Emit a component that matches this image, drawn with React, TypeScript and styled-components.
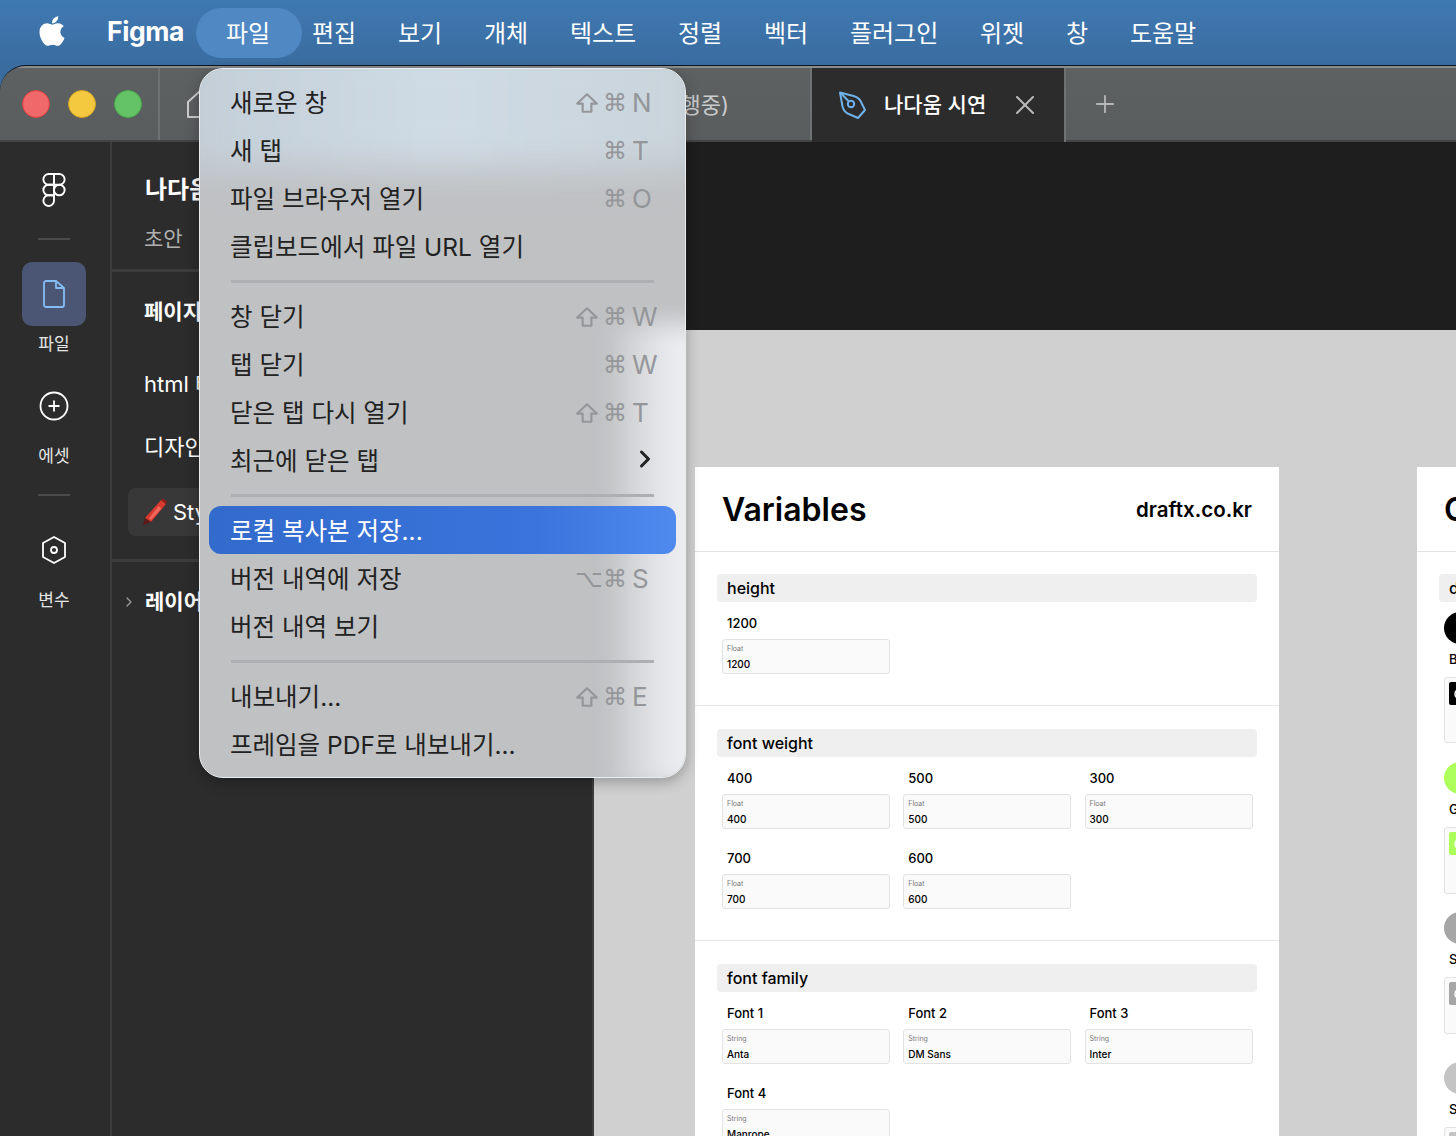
import styled, {createGlobalStyle} from 'styled-components';
import {ChevronRight, Plus, X} from 'lucide-react';
import {FaApple} from 'react-icons/fa';

const menuBarItems = ['편집', '보기', '개체', '텍스트', '정렬', '벡터', '플러그인', '위젯', '창', '도움말'];

type MenuEntry = {
  label: string;
  mod?: 'shift' | 'option';
  cmd?: boolean;
  letter?: string;
  more?: boolean;
  active?: boolean;
};

const menuGroups: MenuEntry[][] = [
  [
    {label: '새로운 창', mod: 'shift', cmd: true, letter: 'N'},
    {label: '새 탭', cmd: true, letter: 'T'},
    {label: '파일 브라우저 열기', cmd: true, letter: 'O'},
    {label: '클립보드에서 파일 URL 열기'},
  ],
  [
    {label: '창 닫기', mod: 'shift', cmd: true, letter: 'W'},
    {label: '탭 닫기', cmd: true, letter: 'W'},
    {label: '닫은 탭 다시 열기', mod: 'shift', cmd: true, letter: 'T'},
    {label: '최근에 닫은 탭', more: true},
  ],
  [
    {label: '로컬 복사본 저장...', active: true},
    {label: '버전 내역에 저장', mod: 'option', cmd: true, letter: 'S'},
    {label: '버전 내역 보기'},
  ],
  [
    {label: '내보내기...', mod: 'shift', cmd: true, letter: 'E'},
    {label: '프레임을 PDF로 내보내기...'},
  ],
];

const swatches = [
  {color: '#000', label: 'Black', h: 66},
  {color: '#adff5c', label: 'Green', h: 67},
  {color: '#a6a6a6', label: 'Surface 1', h: 57},
  {color: '#c4c4c4', label: 'Surface 2', h: 66},
];

function FigmaLogo() {
  return (
    <svg width="24" height="34" viewBox="0 0 22 32" fill="none" stroke="#fff" strokeWidth="1.8">
      <path d="M11 1H6a5 5 0 0 0 0 10h5z"/>
      <path d="M11 1h5a5 5 0 0 1 0 10h-5z"/>
      <path d="M11 11H6a5 5 0 0 0 0 10h5z"/>
      <circle cx="16" cy="16" r="5"/>
      <path d="M6 21h5v5a5 5 0 1 1-5-5z"/>
    </svg>
  );
}

function ShiftIcon() {
  return (
    <svg width="24" height="22" viewBox="0 0 22 20" fill="none" stroke="#94969a" strokeWidth="2" strokeLinejoin="round">
      <path d="M11 2 2 10.500h5V18h8v-7.500h5z"/>
    </svg>
  );
}

function Shortcut({entry}: {entry: MenuEntry}) {
  return (
    <Keys>
      <KeyCell>
        {entry.mod === 'shift' && <ShiftIcon/>}
        {entry.mod === 'option' && '⌥'}
      </KeyCell>
      <KeyCell>⌘</KeyCell>
      <KeyLetter>{entry.letter}</KeyLetter>
    </Keys>
  );
}

function Field({label, type, value}: {label: string; type: string; value: string}) {
  return (
    <FieldWrap>
      <FieldLabel>{label}</FieldLabel>
      <FieldCard>
        <FieldType>{type}</FieldType>
        <FieldValue>{value}</FieldValue>
      </FieldCard>
    </FieldWrap>
  );
}

export default function App() {
  return (
    <Screen>
      <GlobalStyle/>

      <MenuBar>
        <AppleMark><FaApple size={34} color="#fff"/></AppleMark>
        <AppName>Figma</AppName>
        <OpenMenuItem>파일</OpenMenuItem>
        <MenuBarList>
          {menuBarItems.map(item => <MenuBarItem key={item}>{item}</MenuBarItem>)}
        </MenuBarList>
      </MenuBar>

      <Window>
        <TabBar>
          <TrafficLights>
            <Light $color="#f0686a" $edge="#d9403f"/>
            <Light $color="#f5c93f" $edge="#d6a626"/>
            <Light $color="#62c466" $edge="#4aa84e"/>
          </TrafficLights>
          <HomeTab>
            <svg width="28" height="30" viewBox="0 0 28 30" fill="none" stroke="#c9cbcc" strokeWidth="2" strokeLinejoin="round">
              <path d="M2 13 14 2l12 11v15H2z"/>
            </svg>
          </HomeTab>
          <PlainTab>플레이그라운드 프로젝트 (진행중)</PlainTab>
          <ActiveTab>
            <svg width="30" height="30" viewBox="0 0 30 30" fill="none" stroke="#6fb1ea" strokeWidth="2" strokeLinejoin="round">
              <path d="M2 2.500 15.500 6c4 1.200 7 3.500 8 7l3.500 7-7 8-8-3.500c-3.500-1-6.500-4-7.500-8z"/>
              <path d="m2 2.500 8.500 8.500"/>
              <circle cx="13" cy="14" r="3.200"/>
            </svg>
            <ActiveTabTitle>나다움 시연</ActiveTabTitle>
            <X size={32} color="#b9b9b9" strokeWidth={1.5}/>
          </ActiveTab>
          <NewTab><Plus size={28} color="#b4b6b7" strokeWidth={1.6}/></NewTab>
        </TabBar>

        <Workspace>
          <Rail>
            <RailLogo><FigmaLogo/></RailLogo>
            <RailDivider/>
            <RailButton>
              <RailIconBox $active>
                <svg width="24" height="30" viewBox="0 0 24 30" fill="none" stroke="#84bdf5" strokeWidth="1.800" strokeLinejoin="round">
                  <path d="M4 2h10v7h8v17a2 2 0 0 1-2 2H4a2 2 0 0 1-2-2V4a2 2 0 0 1 2-2z"/>
                  <path d="m14 2 8 7"/>
                </svg>
              </RailIconBox>
              <RailLabel>파일</RailLabel>
            </RailButton>
            <RailButton>
              <RailIconBox>
                <svg width="30" height="30" viewBox="0 0 30 30" fill="none" stroke="#fff" strokeWidth="1.800">
                  <circle cx="15" cy="15" r="13.500"/>
                  <path d="M15 9.500v11M9.500 15h11"/>
                </svg>
              </RailIconBox>
              <RailLabel>에셋</RailLabel>
            </RailButton>
            <RailDivider $tight/>
            <RailButton>
              <RailIconBox>
                <svg width="26" height="30" viewBox="0 0 26 30" fill="none" stroke="#fff" strokeWidth="1.800" strokeLinejoin="round">
                  <path d="M13 2 24 8v14l-11 6-11-6V8z"/>
                  <circle cx="13" cy="15" r="3"/>
                </svg>
              </RailIconBox>
              <RailLabel>변수</RailLabel>
            </RailButton>
          </Rail>

          <Panel>
            <PanelHead>
              <FileName>나다움 시연</FileName>
              <FileState>초안</FileState>
            </PanelHead>
            <PagesBlock>
              <BlockTitle>페이지</BlockTitle>
              <PageRow $first>html 태그</PageRow>
              <PageRow>디자인 시스템</PageRow>
              <PageRowActive>
                <svg width="26" height="28" viewBox="0 0 26 28">
                  <path d="M19 2 24 6 9 24 3 20z" fill="#d9392f"/>
                  <path d="M19 2l2-1.500 4 3L24 6z" fill="#8f1f1a"/>
                  <path d="M3 20l6 4-8 3.500z" fill="#5a1b18"/>
                  <path d="M16.500 8l3 2.500L9 22l-2-1.500z" fill="#f0675c"/>
                </svg>
                Style Guide
              </PageRowActive>
            </PagesBlock>
            <LayersRow>
              <ChevronRight size={16} color="#999"/>
              <BlockTitle>레이어</BlockTitle>
            </LayersRow>
          </Panel>

          <Canvas>
            <TopStrip/>
            <Board>
              <Frame>
                <FrameHead>
                  <FrameTitle>Variables</FrameTitle>
                  <FrameSite>draftx.co.kr</FrameSite>
                </FrameHead>
                <Section>
                  <Band>height</Band>
                  <Fields>
                    <Field label="1200" type="Float" value="1200"/>
                  </Fields>
                </Section>
                <Section>
                  <Band>font weight</Band>
                  <Fields>
                    <Field label="400" type="Float" value="400"/>
                    <Field label="500" type="Float" value="500"/>
                    <Field label="300" type="Float" value="300"/>
                    <Field label="700" type="Float" value="700"/>
                    <Field label="600" type="Float" value="600"/>
                  </Fields>
                </Section>
                <Section>
                  <Band>font family</Band>
                  <Fields>
                    <Field label="Font 1" type="String" value="Anta"/>
                    <Field label="Font 2" type="String" value="DM Sans"/>
                    <Field label="Font 3" type="String" value="Inter"/>
                    <Field label="Font 4" type="String" value="Manrope"/>
                  </Fields>
                </Section>
              </Frame>

              <Frame>
                <FrameHead>
                  <FrameTitle>Colors</FrameTitle>
                  <FrameSite>draftx.co.kr</FrameSite>
                </FrameHead>
                <Section>
                  <Band>default</Band>
                  <SwatchList>
                    {swatches.map(s => (
                      <Swatch key={s.label}>
                        <SwatchDot $color={s.color}/>
                        <SwatchName>{s.label}</SwatchName>
                        <SwatchCard $height={s.h}>
                          <SwatchChip $color={s.color}>
                            <svg width="14" height="14" viewBox="0 0 14 14" fill="none" stroke="#fff" strokeWidth="1.500">
                              <circle cx="7" cy="7" r="5"/>
                            </svg>
                          </SwatchChip>
                        </SwatchCard>
                      </Swatch>
                    ))}
                  </SwatchList>
                </Section>
              </Frame>
            </Board>
          </Canvas>
        </Workspace>
      </Window>

      <DropMenu>
        {menuGroups.map((group, i) => (
          <MenuGroup key={i} $first={i === 0}>
            {group.map(entry => (
              <MenuRow key={entry.label} $active={entry.active}>
                <span>{entry.label}</span>
                {entry.letter && <Shortcut entry={entry}/>}
                {entry.more && <MoreArrow><ChevronRight size={28} color="#222" strokeWidth={2.6}/></MoreArrow>}
              </MenuRow>
            ))}
          </MenuGroup>
        ))}
      </DropMenu>
    </Screen>
  );
}

const GlobalStyle = createGlobalStyle`
  html, body {
    margin: 0;
    padding: 0;
    background: #3f76ac;
  }

  * {
    box-sizing: border-box;
  }
`;

const Screen = styled.div`
  position: relative;
  display: flex;
  flex-direction: column;
  width: 1456px;
  height: 1136px;
  overflow: hidden;
  font-family: Inter, "Noto Sans CJK KR", sans-serif;
  background: linear-gradient(180deg, #3f79b2 0, #3a6c9f 66px);
`;

const MenuBar = styled.div`
  display: flex;
  align-items: center;
  flex: 0 0 65px;
  padding-left: 35px;
  color: #fff;
`;

const AppleMark = styled.div`
  display: flex;
  width: 72px;
  margin-top: -3px;
`;

const AppName = styled.div`
  width: 89px;
  padding-bottom: 3px;
  font-size: 26.5px;
  font-weight: 700;
  letter-spacing: -0.4px;
`;

const OpenMenuItem = styled.div`
  display: flex;
  align-items: center;
  justify-content: center;
  width: 106px;
  height: 50px;
  padding: 0 2px 3px 0;
  border-radius: 25px;
  background: #4f88c3;
  font-size: 24px;
`;

const MenuBarList = styled.div`
  display: flex;
  gap: 41.8px;
  margin-left: 10px;
  padding-bottom: 3px;
`;

const MenuBarItem = styled.div`
  font-size: 24px;
  white-space: nowrap;
`;

const Window = styled.div`
  display: flex;
  flex-direction: column;
  flex: 1;
  min-height: 0;
  border-top: 1px solid #0c1520;
  border-top-left-radius: 26px;
  overflow: hidden;
  background: #2c2c2c;
`;

const TabBar = styled.div`
  display: flex;
  flex: 0 0 76px;
  padding-top: 2px;
  background: linear-gradient(180deg, #8a8c8d 0, #8a8c8d 2px, #5d6162 2px, #5a5d5e 100%);
  border-bottom: 2px solid #444;
`;

const TrafficLights = styled.div`
  display: flex;
  align-items: center;
  gap: 18px;
  width: 160px;
  padding-left: 22px;
  border-right: 2px solid #6f7273;
`;

const Light = styled.div<{$color: string; $edge: string}>`
  width: 28px;
  height: 28px;
  border-radius: 50%;
  background: ${({$color}) => $color};
  border: 1px solid ${({$edge}) => $edge};
`;

const HomeTab = styled.div`
  display: flex;
  align-items: center;
  width: 80px;
  padding-left: 26px;
`;

const PlainTab = styled.div`
  display: flex;
  align-items: center;
  justify-content: flex-end;
  width: 572px;
  padding: 0 81px 2px 0;
  border-right: 2px solid #6f7273;
  color: #c9cbcc;
  font-size: 22px;
  white-space: nowrap;
  overflow: hidden;
`;

const ActiveTab = styled.div`
  display: flex;
  align-items: center;
  width: 254px;
  padding-left: 26px;
  margin-bottom: -2px;
  background: #2c2c2c;
  border-right: 2px solid #6f7273;
`;

const ActiveTabTitle = styled.div`
  width: 125px;
  margin-left: 16px;
  padding-bottom: 4px;
  color: #fff;
  font-size: 21px;
  font-weight: 500;
`;

const NewTab = styled.div`
  display: flex;
  align-items: center;
  padding-left: 25px;
`;

const Workspace = styled.div`
  display: flex;
  flex: 1;
  min-height: 0;
`;

const Rail = styled.div`
  display: flex;
  flex-direction: column;
  align-items: center;
  flex: 0 0 112px;
  padding-right: 2px;
  background: #2c2c2c;
  border-right: 2px solid #3d3d3d;
`;

const RailLogo = styled.div`
  display: flex;
  margin-top: 31px;
`;

const RailDivider = styled.div<{$tight?: boolean}>`
  width: 32px;
  height: 2px;
  margin: ${({$tight}) => ($tight ? '8px' : '31px')} 0 22px;
  background: #4b4b4b;
`;

const RailButton = styled.div`
  display: flex;
  flex-direction: column;
  align-items: center;
  margin-bottom: 17px;
`;

const RailIconBox = styled.div<{$active?: boolean}>`
  display: flex;
  align-items: center;
  justify-content: center;
  width: 64px;
  height: 64px;
  border-radius: 10px;
  background: ${({$active}) => ($active ? '#4a5673' : 'transparent')};
`;

const RailLabel = styled.div`
  margin-top: 5px;
  color: #e4e4e4;
  font-size: 17px;
  line-height: 26px;
`;

const Panel = styled.div`
  flex: 0 0 482px;
  background: #2c2c2c;
  color: #fff;
  border-right: 2px solid #3d3d3d;
`;

const PanelHead = styled.div`
  height: 130px;
  padding: 30px 0 0 32px;
  border-bottom: 3px solid #3d3d3d;
`;

const FileName = styled.div`
  padding-left: 1px;
  font-size: 24px;
  font-weight: 700;
  line-height: 36px;
`;

const FileState = styled.div`
  margin-top: 17px;
  color: #b0b0b0;
  font-size: 21px;
  line-height: 28px;
`;

const PagesBlock = styled.div`
  height: 290px;
  padding: 24px 0 0 32px;
  border-bottom: 3px solid #3d3d3d;
`;

const BlockTitle = styled.div`
  font-size: 21px;
  font-weight: 700;
  line-height: 32px;
`;

const PageRow = styled.div<{$first?: boolean}>`
  margin-top: ${({$first}) => ($first ? '40px' : '31px')};
  font-size: 22px;
  line-height: 32px;
  white-space: nowrap;
`;

const PageRowActive = styled.div`
  display: flex;
  align-items: center;
  gap: 5px;
  height: 48px;
  margin: 25px 20px 0 -16px;
  padding: 0 0 1px 14px;
  border-radius: 8px;
  background: #383838;
  font-size: 22px;
  white-space: nowrap;
`;

const LayersRow = styled.div`
  display: flex;
  align-items: center;
  gap: 8px;
  padding: 24px 0 0 9px;
`;

const Canvas = styled.div`
  flex: 1;
  min-width: 0;
  display: flex;
  flex-direction: column;
  background: #d0d0d0;
`;

const TopStrip = styled.div`
  flex: 0 0 188px;
  background: #1e1e1e;
`;

const Board = styled.div`
  display: flex;
  gap: 138px;
  padding: 137px 0 0 101px;
`;

const Frame = styled.div`
  flex: 0 0 584px;
  height: 900px;
  background: #fff;
`;

const FrameHead = styled.div`
  display: flex;
  align-items: center;
  justify-content: space-between;
  height: 85px;
  margin-bottom: -1px;
  padding: 0 27px 0 28px;
  border-bottom: 1px solid #e3e3e3;
`;

const FrameTitle = styled.div`
  margin-left: -1px;
  color: #000;
  font-size: 32px;
  font-weight: 600;
`;

const FrameSite = styled.div`
  color: #000;
  font-size: 20.5px;
  font-weight: 600;
`;

const Section = styled.div`
  padding: 23px 22px 31px;
  border-bottom: 1px solid #e6e6e6;
`;

const Band = styled.div`
  height: 28px;
  padding-left: 10px;
  border-radius: 4px;
  background: #efefef;
  color: #000;
  font-size: 16px;
  font-weight: 500;
  line-height: 28px;
`;

const Fields = styled.div`
  display: grid;
  grid-template-columns: repeat(3, 168px);
  column-gap: 13.25px;
  row-gap: 18px;
  margin-top: 10px;
  padding-left: 5px;
`;

const FieldWrap = styled.div`
  display: flex;
  flex-direction: column;
`;

const FieldLabel = styled.div`
  height: 27px;
  padding-left: 5px;
  color: #000;
  font-size: 13px;
  font-weight: 500;
  line-height: 22px;
`;

const FieldCard = styled.div`
  height: 35px;
  padding: 4px 4px 0;
  border: 1px solid #e2e2e2;
  border-radius: 3px;
  background: #fafafa;
`;

const FieldType = styled.div`
  color: #7a7a7a;
  font-size: 7px;
  line-height: 9px;
`;

const FieldValue = styled.div`
  margin-top: 5px;
  color: #000;
  font-size: 10px;
  font-weight: 500;
  line-height: 13px;
`;

const SwatchList = styled.div`
  display: flex;
  flex-direction: column;
  margin-top: 10px;
  padding-left: 5px;
`;

const Swatch = styled.div`
  display: flex;
  flex-direction: column;
  align-items: flex-start;
  height: 150px;
`;

const SwatchDot = styled.div<{$color: string}>`
  width: 32px;
  height: 32px;
  border-radius: 50%;
  background: ${({$color}) => $color};
`;

const SwatchName = styled.div`
  margin: 7px 0 10px 5px;
  color: #000;
  font-size: 13px;
  font-weight: 500;
  line-height: 16px;
`;

const SwatchCard = styled.div<{$height: number}>`
  width: 168px;
  height: ${({$height}) => $height}px;
  padding: 4px;
  border: 1px solid #e2e2e2;
  border-radius: 3px;
  background: #fafafa;
`;

const SwatchChip = styled.div<{$color: string}>`
  display: flex;
  align-items: center;
  width: 60px;
  height: 23px;
  padding-left: 4px;
  border-radius: 2px;
  background: ${({$color}) => $color};
`;

const DropMenu = styled.div`
  position: absolute;
  left: 199px;
  top: 68px;
  width: 487px;
  height: 710px;
  padding: 9px 9px 0;
  overflow: hidden;
  border: 1px solid #e9edf0;
  border-radius: 24px;
  box-shadow: 0 4px 14px rgba(0, 0, 0, 0.28);
  background: #bfc1c3;

  /* what the frosted glass picks up from behind: the blue desktop on top */
  &::before {
    content: '';
    position: absolute;
    left: -20px;
    right: -20px;
    top: -30px;
    height: 130px;
    background: linear-gradient(90deg, #c3ced7 0, #cfdbe5 50%, #c9d3da 100%);
    filter: blur(18px);
  }

  /* and the white frame at the lower right */
  &::after {
    content: '';
    position: absolute;
    left: 415px;
    right: -30px;
    top: 255px;
    bottom: -10px;
    background: linear-gradient(90deg, #c9cbcd 0, #e9ebee 55%, #eff1f3 100%);
    filter: blur(12px);
  }
`;

const MenuGroup = styled.div<{$first?: boolean}>`
  position: relative;
  z-index: 1;
  padding-top: ${({$first}) => ($first ? '0' : '9px')};
  margin: ${({$first}) => ($first ? '0' : '10px 22px 0')};
  border-top: ${({$first}) => ($first ? 'none' : '3px solid #aeafb3')};

  & > div {
    margin: ${({$first}) => ($first ? '0' : '0 -22px')};
  }
`;

const MenuRow = styled.div<{$active?: boolean}>`
  display: flex;
  align-items: center;
  justify-content: space-between;
  height: 48px;
  padding: 0 16px 2px 21px;
  border-radius: 12px;
  color: ${({$active}) => ($active ? '#fff' : '#222')};
  background: ${({$active}) => ($active ? 'linear-gradient(90deg, #326bcb 0, #3a74dc 70%, #4f8bef 100%)' : 'transparent')};
  font-size: 24.5px;
  white-space: nowrap;
`;

const Keys = styled.div`
  display: flex;
  align-items: center;
  color: #94969a;
`;

const KeyCell = styled.div`
  display: flex;
  align-items: center;
  width: 29px;
  margin-left: -1px;
  padding-top: 4px;
  font-family: "DejaVu Sans", sans-serif;
  font-size: 24px;
  line-height: 30px;
`;

const KeyLetter = styled.div`
  width: 28px;
  padding-top: 2px;
  font-size: 26px;
`;

const MoreArrow = styled.div`
  display: flex;
  margin-right: 1px;
`;
